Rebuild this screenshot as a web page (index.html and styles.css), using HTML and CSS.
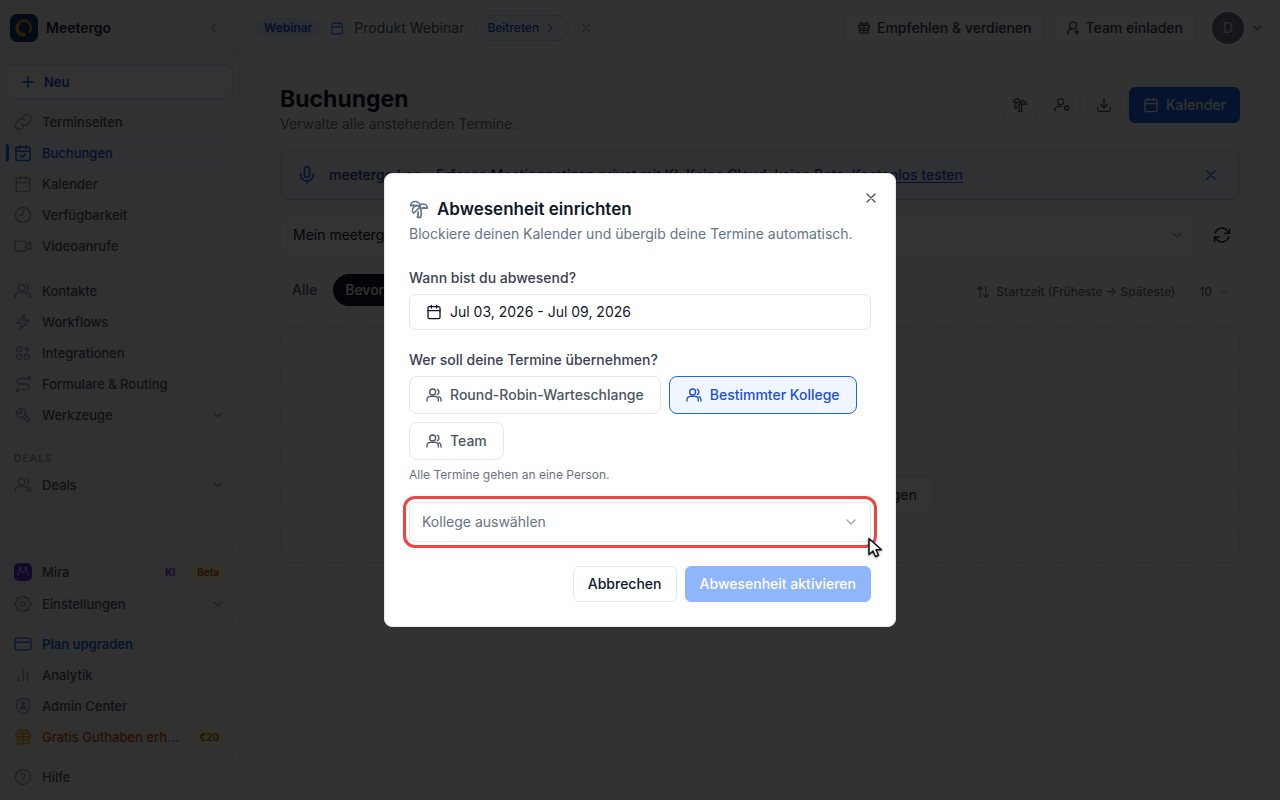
FILE: index.html
```html
<!DOCTYPE html>
<html lang="de">
<head>
<meta charset="utf-8">
<meta name="viewport" content="width=device-width, initial-scale=1">
<title>Meetergo – Buchungen</title>
<link rel="stylesheet" href="styles.css">
</head>
<body>
<svg class="sprite" aria-hidden="true">
  <symbol id="chevron-down" viewBox="0 0 24 24"><path d="m6 9 6 6 6-6"/></symbol>
  <symbol id="chevron-left" viewBox="0 0 24 24"><path d="m15 5-7 7 7 7"/></symbol>
  <symbol id="chevron-right" viewBox="0 0 24 24"><path d="m9 5 7 7-7 7"/></symbol>
  <symbol id="x" viewBox="0 0 24 24"><path d="M18 6 6 18M6 6l12 12"/></symbol>
  <symbol id="plus" viewBox="0 0 24 24"><path d="M12 4v16M4 12h16"/></symbol>
  <symbol id="link" viewBox="0 0 24 24"><path d="M9.500 14.500a5.200 5.200 0 0 0 7.600.5l4-4a5.300 5.300 0 0 0-7.500-7.500l-2 2M14.500 9.500a5.200 5.200 0 0 0-7.600-.5l-4 4a5.300 5.300 0 0 0 7.500 7.500l2-2"/></symbol>
  <symbol id="calendar" viewBox="0 0 24 24"><rect x="3" y="4" width="18" height="18" rx="2"/><path d="M8 2v4M16 2v4M3 10h18"/></symbol>
  <symbol id="calendar-check" viewBox="0 0 24 24"><rect x="2.500" y="4" width="19" height="18" rx="2"/><path d="M8 2v4M16 2v4M2.500 9.500h19m-12.500 6 2 2 4-4"/></symbol>
  <symbol id="clock" viewBox="0 0 24 24"><circle cx="12" cy="12" r="10"/><path d="M12 6v6H8"/></symbol>
  <symbol id="video" viewBox="0 0 24 24"><rect x="1.500" y="5.500" width="14.500" height="13" rx="2"/><path d="m16 10.500 5-3.500a.6.6 0 0 1 1 .5v9a.6.600 0 0 1-1 .5l-5-3.500"/></symbol>
  <symbol id="users" viewBox="0 0 24 24"><circle cx="10" cy="7.500" r="4.500"/><path d="M1.500 21v-2a5 5 0 0 1 5-5h7a5 5 0 0 1 5 5v2M17 3.500a4.500 4.500 0 0 1 0 8M19.500 14.500a5 5 0 0 1 3 4.500v2"/></symbol>
  <symbol id="bolt" viewBox="0 0 24 24"><path d="M14 2 4 13.500h6.500L8.500 22 20 9.500h-7z"/></symbol>
  <symbol id="apps" viewBox="0 0 24 24"><rect x="4" y="4" width="6" height="6" rx="1"/><rect x="4" y="14" width="6" height="6" rx="1"/><rect x="14" y="14" width="6" height="6" rx="1"/><path d="M14 7h7M17.500 3.500v7"/></symbol>
  <symbol id="route" viewBox="0 0 24 24"><circle cx="5" cy="20" r="2"/><circle cx="20" cy="4" r="2"/><path d="M16 4.500H8a3.500 3.500 0 0 0 0 7.500h8.500a3.500 3.500 0 0 1 0 7.500H11"/></symbol>
  <symbol id="tool" viewBox="0 0 24 24"><path d="M7 10h3V7L6.500 3.500a6 6 0 0 1 8 8l6 6a2.100 2.100 0 0 1-3 3l-6-6a6 6 0 0 1-8-8z"/></symbol>
  <symbol id="gear" viewBox="0 0 24 24"><path d="M9.800 3.200c.5-2.300 3.900-2.300 4.400 0a2 2 0 0 0 3 1.200c2-1.200 4.200 1.100 3 3a2 2 0 0 0 1.200 2.700c2 .6 2 3.300 0 3.800a2 2 0 0 0-1.200 2.800c1.200 2-1 4.200-3 3a2 2 0 0 0-3 1.200c-.5 2.100-3.900 2.100-4.400 0a2 2 0 0 0-3-1.200c-2 1.200-4.200-1-3-3a2 2 0 0 0-1.200-2.800c-2-.5-2-3.200 0-3.800a2 2 0 0 0 1.200-2.700c-1.200-1.900 1-4.200 3-3a2 2 0 0 0 3-1.200z"/><circle cx="12" cy="12" r="3"/></symbol>
  <symbol id="card" viewBox="0 0 24 24"><rect x="1.500" y="4" width="21" height="16" rx="2"/><path d="M1.500 9.500h21"/></symbol>
  <symbol id="bars" viewBox="0 0 24 24"><path d="M6 20v-7M12 20V4M18 20V9"/></symbol>
  <symbol id="shield" viewBox="0 0 24 24"><path d="m12 2 8.500 2.500V13c0 4.500-3.500 7.500-8.500 9.500-5-2-8.500-5-8.500-9.500V4.500z"/><circle cx="12" cy="9" r="2" fill="currentColor"/><path d="M8.500 15.500c.5-3.500 6.500-3.500 7 0z" fill="currentColor"/></symbol>
  <symbol id="gift" viewBox="0 0 24 24"><rect x="2.500" y="7.500" width="19" height="4.500" rx="1"/><path d="M4.500 12v7a2 2 0 0 0 2 2h11a2 2 0 0 0 2-2v-7M12 7.500V21M4.500 16h15M12 7.500C10.500 1.500 5 1.500 5 5c0 1.500 1 2.500 2.500 2.500M12 7.500c1.500-6 7-6 7-2.500 0 1.500-1 2.500-2.500 2.500"/></symbol>
  <symbol id="help" viewBox="0 0 24 24"><circle cx="12" cy="12" r="10"/><path d="M9.100 9a3 3 0 0 1 5.800 1c0 2-2.900 2.500-2.900 4M12 17.500v.1"/></symbol>
  <symbol id="mic" viewBox="0 0 24 24"><rect x="9" y="2" width="6" height="13" rx="3"/><path d="M4.500 10.500V12a7.500 7.500 0 0 0 15 0v-1.500M12 19.500V22"/></symbol>
  <symbol id="palm" viewBox="0 0 24 24"><path d="M13 8c0-2.760-2.460-5-5.500-5S2 5.240 2 8h2l1-1 1 1h4"/><path d="M13 7.140A5.820 5.820 0 0 1 16.500 6c3.040 0 5.500 2.240 5.500 5h-3l-1-1-1 1h-3"/><path d="M5.890 9.710c-2.150 2.150-2.300 5.470-.35 7.430l4.240-4.250.7-.7.710-.71 2.120-2.120c-1.950-1.960-5.270-1.800-7.420.35"/><path d="M11 15.500c.5 2.500-.17 4.500-1 6.500h4c2-5.500-.5-12-1-14"/></symbol>
  <symbol id="user-plus" viewBox="0 0 24 24"><path d="M3 23v-1a8.500 8.500 0 0 1 6-8.500"/><circle cx="12" cy="7.500" r="6"/><path d="M18.500 15v7.500M14.700 18.700h7.600"/></symbol>
  <symbol id="user-cog" viewBox="0 0 24 24"><path d="M1.500 21v-2a6 6 0 0 1 6-5h4"/><circle cx="10" cy="7" r="4.500"/><circle cx="19" cy="16.500" r="3" stroke-width="2.500"/></symbol>
  <symbol id="download" viewBox="0 0 24 24"><path d="M2.500 15.500V19a2.500 2.500 0 0 0 2.500 2.500h14a2.500 2.500 0 0 0 2.500-2.500v-3.500M7 11l5 5 5-5M12 16V2.500"/></symbol>
  <symbol id="refresh" viewBox="0 0 24 24"><path d="M22 3.500v6h-6M2 20.500v-6h6M3 9.500a9.300 9.300 0 0 1 15.500-4l3.500 4M2 14.500l3.500 4a9.300 9.300 0 0 0 15.500-4"/></symbol>
  <symbol id="sort" viewBox="0 0 24 24"><path d="M7 21V3L2.500 7.500M7 3l4 4.500M17 3v18l-4.500-4.500M17 21l4.500-4.500"/></symbol>
</svg>

<div class="app">
  <aside class="sidebar">
    <div class="brand">
      <svg class="brand-logo" viewBox="0 0 28 28" aria-hidden="true"><rect width="28" height="28" rx="7" fill="#1b3a70"/><path d="M12.500 20.500A7 7 0 1 1 19 18.500" fill="none" stroke="#f59e2b" stroke-width="2"/><path d="M9 10a6 6 0 0 0 3.500 10.500" fill="none" stroke="#f59e2b" stroke-width="3"/><circle cx="13.500" cy="20.500" r="2" fill="#f59e2b"/></svg>
      <span class="brand-name">Meetergo</span>
      <button class="plain collapse" aria-label="Seitenleiste einklappen"><svg class="icon i14"><use href="#chevron-left"/></svg></button>
    </div>
    <div class="side-body">
      <button class="new-button"><svg class="icon i16"><use href="#plus"/></svg>Neu</button>
      <nav class="nav">
        <a href="#" class="item"><svg class="icon i18"><use href="#link"/></svg>Terminseiten</a>
        <a href="#" class="item active"><svg class="icon i18"><use href="#calendar-check"/></svg>Buchungen</a>
        <a href="#" class="item"><svg class="icon i18"><use href="#calendar"/></svg>Kalender</a>
        <a href="#" class="item"><svg class="icon i18"><use href="#clock"/></svg>Verfügbarkeit</a>
        <a href="#" class="item"><svg class="icon i18"><use href="#video"/></svg>Videoanrufe</a>
      </nav>
      <nav class="nav second">
        <a href="#" class="item"><svg class="icon i18"><use href="#users"/></svg>Kontakte</a>
        <a href="#" class="item"><svg class="icon i18"><use href="#bolt"/></svg>Workflows</a>
        <a href="#" class="item"><svg class="icon i18"><use href="#apps"/></svg>Integrationen</a>
        <a href="#" class="item"><svg class="icon i18"><use href="#route"/></svg>Formulare &amp; Routing</a>
        <a href="#" class="item"><svg class="icon i18"><use href="#tool"/></svg>Werkzeuge<svg class="icon i14 end"><use href="#chevron-down"/></svg></a>
      </nav>
      <div class="section-label">DEALS</div>
      <nav class="nav">
        <a href="#" class="item"><svg class="icon i18"><use href="#users"/></svg>Deals<svg class="icon i14 end"><use href="#chevron-down"/></svg></a>
      </nav>
    </div>
    <div class="side-foot">
      <nav class="nav foot-group">
        <a href="#" class="item"><svg class="mira" viewBox="0 0 18 18" aria-hidden="true"><rect width="18" height="18" rx="5" fill="#5b2fe0"/><path d="m4 12 2-7 3 5 3-5 2 7" fill="none" stroke="#c4b5fd"/><circle cx="6" cy="5" r="1" fill="#fff"/><circle cx="12" cy="5" r="1" fill="#fff"/></svg>Mira<span class="badge violet end">KI</span><span class="badge amber">Beta</span></a>
        <a href="#" class="item"><svg class="icon i18"><use href="#gear"/></svg>Einstellungen<svg class="icon i14 end"><use href="#chevron-down"/></svg></a>
      </nav>
      <nav class="nav foot-group">
        <a href="#" class="item upgrade"><svg class="icon i18"><use href="#card"/></svg>Plan upgraden</a>
        <a href="#" class="item"><svg class="icon i18"><use href="#bars"/></svg>Analytik</a>
        <a href="#" class="item"><svg class="icon i18"><use href="#shield"/></svg>Admin Center</a>
        <a href="#" class="item credit"><svg class="icon i18"><use href="#gift"/></svg><span class="ellipsis">Gratis Guthaben erhalten</span><span class="badge yellow">€20</span></a>
      </nav>
      <nav class="nav foot-group">
        <a href="#" class="item"><svg class="icon i18"><use href="#help"/></svg>Hilfe</a>
      </nav>
    </div>
  </aside>

  <div class="main">
    <header class="topbar">
      <span class="tag">Webinar</span>
      <svg class="icon i14 blue"><use href="#calendar"/></svg>
      <span class="event">Produkt Webinar</span>
      <button class="join">Beitreten<svg class="icon i12"><use href="#chevron-right"/></svg></button>
      <button class="plain dismiss" aria-label="Ausblenden"><svg class="icon i14"><use href="#x"/></svg></button>
      <div class="top-actions">
        <button class="outline-button"><svg class="icon i14"><use href="#gift"/></svg>Empfehlen &amp; verdienen</button>
        <button class="outline-button"><svg class="icon i14"><use href="#user-plus"/></svg>Team einladen</button>
        <button class="plain profile"><span class="avatar">D</span><svg class="icon i14"><use href="#chevron-down"/></svg></button>
      </div>
    </header>

    <main class="content">
      <div class="page-head">
        <div>
          <h1>Buchungen</h1>
          <p class="subtitle">Verwalte alle anstehenden Termine.</p>
        </div>
        <div class="page-actions">
          <button class="square" aria-label="Abwesenheit"><svg class="icon i16"><use href="#palm"/></svg></button>
          <button class="square" aria-label="Vertretung"><svg class="icon i16"><use href="#user-cog"/></svg></button>
          <button class="square" aria-label="Exportieren"><svg class="icon i16"><use href="#download"/></svg></button>
          <button class="primary"><svg class="icon i16"><use href="#calendar"/></svg>Kalender</button>
        </div>
      </div>

      <div class="notice">
        <svg class="icon i20"><use href="#mic"/></svg>
        <p>meetergo Log – Erfasse Meetingnotizen privat mit KI. Keine Cloud, keine Bots. <a href="#">Kostenlos testen</a></p>
        <button class="plain" aria-label="Hinweis schließen"><svg class="icon i16"><use href="#x"/></svg></button>
      </div>

      <div class="filter-row">
        <div class="select-wrap">
          <select class="select calendar-select" aria-label="Kalender"><option>Mein meetergo</option></select>
          <svg class="icon i16 select-arrow"><use href="#chevron-down"/></svg>
        </div>
        <button class="plain refresh" aria-label="Aktualisieren"><svg class="icon i18"><use href="#refresh"/></svg></button>
      </div>

      <div class="tabs-row">
        <button class="tab">Alle</button>
        <button class="tab selected">Bevorstehend</button>
        <button class="plain sort"><svg class="icon i14"><use href="#sort"/></svg>Startzeit (Früheste → Späteste)</button>
        <button class="plain count">10<svg class="icon i12"><use href="#chevron-down"/></svg></button>
      </div>

      <div class="empty">
        <div class="empty-actions"><button class="outline-button tall">Terminseiten anzeigen</button></div>
      </div>
    </main>
  </div>
</div>

<div class="overlay">
  <div class="dialog" role="dialog" aria-modal="true" aria-labelledby="dialog-title">
    <button class="plain close" aria-label="Schließen"><svg class="icon i16"><use href="#x"/></svg></button>
    <h2 id="dialog-title"><svg class="icon i20"><use href="#palm"/></svg>Abwesenheit einrichten</h2>
    <p class="description">Blockiere deinen Kalender und übergib deine Termine automatisch.</p>

    <label class="field-label" for="range">Wann bist du abwesend?</label>
    <button class="range" id="range"><svg class="icon i16"><use href="#calendar"/></svg>Jul 03, 2026 - Jul 09, 2026</button>

    <div class="field-label" id="who">Wer soll deine Termine übernehmen?</div>
    <div class="choices" role="group" aria-labelledby="who">
      <button class="choice"><svg class="icon i16"><use href="#users"/></svg>Round-Robin-Warteschlange</button>
      <button class="choice chosen" aria-pressed="true"><svg class="icon i16"><use href="#users"/></svg>Bestimmter Kollege</button>
      <button class="choice"><svg class="icon i16"><use href="#users"/></svg>Team</button>
    </div>
    <p class="hint">Alle Termine gehen an eine Person.</p>

    <div class="select-wrap highlighted">
      <select class="select colleague" aria-label="Kollege"><option>Kollege auswählen</option></select>
      <svg class="icon i16 select-arrow"><use href="#chevron-down"/></svg>
      <svg class="pointer" viewBox="0 0 18 22" aria-hidden="true"><path d="M2 1.500v16l4-3.500 2.500 5.500 3-1.300L9 12.700h5.500z" fill="#fff" stroke="#111" stroke-width="1.500" stroke-linejoin="round"/></svg>
    </div>

    <div class="dialog-actions">
      <button class="cancel">Abbrechen</button>
      <button class="confirm" disabled>Abwesenheit aktivieren</button>
    </div>
  </div>
</div>
</body>
</html>
```
FILE: styles.css
```css
* { box-sizing: border-box; }

body {
  margin: 0;
  font: 14px/20px Inter, "Liberation Sans", sans-serif;
  color: #0f172a;
  background: #f8faf9;
}

h1, h2, p { margin: 0; }
a { color: inherit; text-decoration: none; }

button, select { font: inherit; color: inherit; }
button {
  display: inline-flex;
  align-items: center;
  white-space: nowrap;
  cursor: pointer;
}

.plain { padding: 0; border: 0; background: none; }
.sprite { display: none; }

.icon {
  flex: none;
  fill: none;
  stroke: currentColor;
  stroke-width: 2;
  stroke-linecap: round;
  stroke-linejoin: round;
}
.i12 { width: 12px; height: 12px; }
.i14 { width: 14px; height: 14px; }
.i16 { width: 16px; height: 16px; }
.i18 { width: 18px; height: 18px; }
.i20 { width: 20px; height: 20px; }
.blue { color: #3b82f6; }
.end { margin-left: auto; }

.app {
  display: grid;
  grid-template-columns: 240px 1fr;
  min-height: 100vh;
}

/* Sidebar */
.sidebar {
  display: flex;
  flex-direction: column;
  border-right: 1px solid #e5e7eb;
  background: #f5f5f5;
}
.brand {
  display: flex;
  align-items: center;
  gap: 8px;
  height: 56px;
  padding: 0 18px 0 10px;
  border-bottom: 1px solid #e5e7eb;
}
.brand-logo { width: 28px; height: 28px; }
.brand-name { font-weight: 600; color: #1f2937; }
.collapse { margin-left: auto; color: #9ca3af; }

.side-body { flex: 1; padding: 8px 6px 0; }
.new-button {
  gap: 8px;
  width: 100%;
  height: 35px;
  margin-bottom: 8px;
  padding: 0 13px;
  border: 1px solid #bfdbfe;
  border-radius: 8px;
  background: #fff;
  color: #1d4ed8;
  font-size: 13px;
  font-weight: 600;
}

.nav { display: flex; flex-direction: column; gap: 1px; }
.second { margin-top: 15px; }
.item {
  position: relative;
  display: flex;
  align-items: center;
  gap: 10px;
  height: 30px;
  padding: 0 8px;
  border-radius: 8px;
  font-size: 13px;
  font-weight: 500;
  color: #4b5563;
}
.item .icon { color: #94a3b8; }
.active { background: #eef5ff; color: #1d4ed8; }
.active .icon { color: #2563eb; }
.active::before {
  content: "";
  position: absolute;
  left: 0;
  top: 6px;
  bottom: 6px;
  width: 3px;
  border-radius: 0 3px 3px 0;
  background: #2563eb;
}
.section-label {
  margin: 18px 8px 2px;
  font-size: 10px;
  font-weight: 600;
  letter-spacing: 0.12em;
  color: #94a3b8;
}

.side-foot { padding: 0 6px 8px; }
.foot-group { padding: 5px 0; border-top: 1px solid #e5e7eb; }
.foot-group:first-child { padding: 8px 0 4px; gap: 2px; }
.foot-group:last-child { padding: 4px 0 0; }
.mira { width: 18px; height: 18px; }
.upgrade { color: #2563eb; font-weight: 600; }
.upgrade .icon { color: #3b82f6; }
.credit { color: #b45309; }
.credit .icon { color: #f59e0b; }
.ellipsis { overflow: hidden; text-overflow: ellipsis; white-space: nowrap; }
.badge {
  padding: 0 6px;
  border-radius: 8px;
  font-size: 10px;
  line-height: 15px;
  font-weight: 600;
}
.violet { background: #ede9fe; color: #6d28d9; }
.amber { background: #fef3c7; color: #b45309; }
.yellow { background: #fef3c7; color: #a16207; }

/* Top bar */
.main { min-width: 0; }
.topbar {
  display: flex;
  align-items: center;
  gap: 10px;
  height: 56px;
  padding: 0 16px;
  border-bottom: 1px solid #e5e7eb;
  background: #fafafa;
}
.tag {
  padding: 0 8px;
  border-radius: 10px;
  background: #dbeafe;
  color: #1d4ed8;
  font-size: 12px;
  font-weight: 600;
}
.event { color: #4b5563; }
.join {
  gap: 5px;
  height: 26px;
  padding: 0 12px;
  border: 1px solid #bfdbfe;
  border-radius: 13px;
  background: #eff6ff;
  color: #1d4ed8;
  font-size: 12px;
  font-weight: 500;
}
.dismiss { color: #9ca3af; }
.top-actions { display: flex; align-items: center; gap: 8px; margin-left: auto; }
.outline-button {
  gap: 6px;
  height: 34px;
  padding: 0 12px;
  border: 1px solid #e5e7eb;
  border-radius: 6px;
  background: #fcfcfc;
  color: #374151;
  font-weight: 500;
}
.tall { height: 38px; padding: 0 16px; background: #fff; }
.profile { gap: 6px; margin-left: 8px; color: #6b7280; }
.avatar {
  width: 32px;
  border-radius: 16px;
  background: #6b7280;
  color: #e5e7eb;
  line-height: 32px;
}

/* Page */
.content { padding: 27px 40px; }
.page-head { display: flex; justify-content: space-between; align-items: flex-start; }
h1 { font-size: 23px; line-height: 32px; font-weight: 700; }
.subtitle { color: #6b7280; line-height: 18px; }
.page-actions { display: flex; align-items: center; gap: 8px; padding-top: 4px; }
.square {
  justify-content: center;
  width: 34px;
  height: 34px;
  padding: 0;
  border: 1px solid #e5e7eb;
  border-radius: 6px;
  background: #fafafa;
  color: #4b5563;
}
.primary {
  gap: 7px;
  height: 36px;
  padding: 0 14px;
  border: 0;
  border-radius: 6px;
  background: #1d5fea;
  color: #fff;
  font-weight: 500;
}

.notice {
  display: flex;
  align-items: center;
  gap: 12px;
  height: 50px;
  margin-top: 17px;
  padding: 0 20px 0 16px;
  border: 1px solid #bfdbfe;
  border-radius: 8px;
  background: #eff3fa;
  color: #1e3a8a;
  font-weight: 500;
}
.notice p { flex: 1; }
.notice .icon { color: #2563eb; }
.notice a { color: #1d4ed8; text-decoration: underline; text-underline-offset: 2px; }

.filter-row { display: flex; align-items: center; gap: 16px; margin-top: 16px; padding-right: 9px; }
.select-wrap { position: relative; flex: 1; }
.select {
  display: block;
  width: 100%;
  padding: 0 12px;
  border: 1px solid #e2e8f0;
  border-radius: 6px;
  background: #fff;
  appearance: none;
}
.calendar-select { height: 38px; }
.select-arrow {
  position: absolute;
  top: 0;
  bottom: 0;
  right: 12px;
  margin: auto 0;
  color: #9ca3af;
  pointer-events: none;
}
.refresh { color: #1f2937; }

.tabs-row { display: flex; align-items: flex-end; gap: 4px; margin-top: 20px; }
.tab {
  height: 32px;
  padding: 0 12px;
  border: 0;
  border-radius: 16px;
  background: none;
  color: #4b5563;
  font-weight: 500;
}
.selected { background: #0f172a; color: #fff; }
.sort, .count { gap: 6px; height: 28px; color: #6b7280; font-size: 12px; font-weight: 500; }
.sort { margin-left: auto; }
.count { margin: 0 10px 0 20px; }

.empty {
  display: flex;
  flex-direction: column;
  align-items: center;
  justify-content: flex-end;
  min-height: 238px;
  margin-top: 20px;
  padding: 48px;
  border: 2px dashed #e5e7eb;
  border-radius: 8px;
}
.empty-actions { display: flex; justify-content: flex-end; width: 100%; max-width: 348px; }

/* Dialog */
.overlay {
  position: fixed;
  inset: 0;
  display: flex;
  align-items: center;
  justify-content: center;
  background: rgba(0, 0, 0, 0.8);
}
.dialog {
  position: relative;
  width: 100%;
  max-width: 512px;
  padding: 24px;
  border: 1px solid #e2e8f0;
  border-radius: 8px;
  background: #fff;
}
.close { position: absolute; top: 16px; right: 16px; color: #4b5563; }
h2 {
  display: flex;
  align-items: center;
  gap: 8px;
  font-size: 17px;
  line-height: 22px;
  font-weight: 600;
}
h2 .icon { color: #64748b; }
.description { margin: 4px 0 24px; color: #64748b; }
.field-label { display: block; margin-bottom: 6px; font-weight: 500; color: #374151; }
.range {
  gap: 8px;
  width: 100%;
  height: 36px;
  margin-bottom: 20px;
  padding: 0 16px;
  border: 1px solid #e2e8f0;
  border-radius: 6px;
  background: #fff;
}
.choices { display: flex; flex-wrap: wrap; gap: 8px; }
.choice {
  gap: 8px;
  height: 38px;
  padding: 0 16px;
  border: 1px solid #e5e7eb;
  border-radius: 8px;
  background: #fff;
  color: #4b5563;
  font-weight: 500;
}
.chosen { border-color: #2563eb; background: #eff6ff; color: #1d4ed8; }
.hint { margin: 7px 0 19px; font-size: 12px; line-height: 16px; color: #6b7280; }
.highlighted { border-radius: 6px; outline: 3px solid #ef4444; outline-offset: 3px; }
.colleague { height: 40px; color: #64748b; }
.pointer {
  position: absolute;
  right: -14px;
  bottom: -17px;
  width: 18px;
  height: 22px;
  filter: drop-shadow(0 1px 1px rgba(0, 0, 0, 0.4));
}
.dialog-actions { display: flex; justify-content: flex-end; gap: 8px; margin-top: 24px; }
.cancel, .confirm {
  height: 36px;
  padding: 0 14px;
  border: 1px solid #e2e8f0;
  border-radius: 6px;
  background: #fff;
  font-weight: 500;
}
.confirm { border-color: #8fb6fb; background: #8fb6fb; color: #fff; }
```
